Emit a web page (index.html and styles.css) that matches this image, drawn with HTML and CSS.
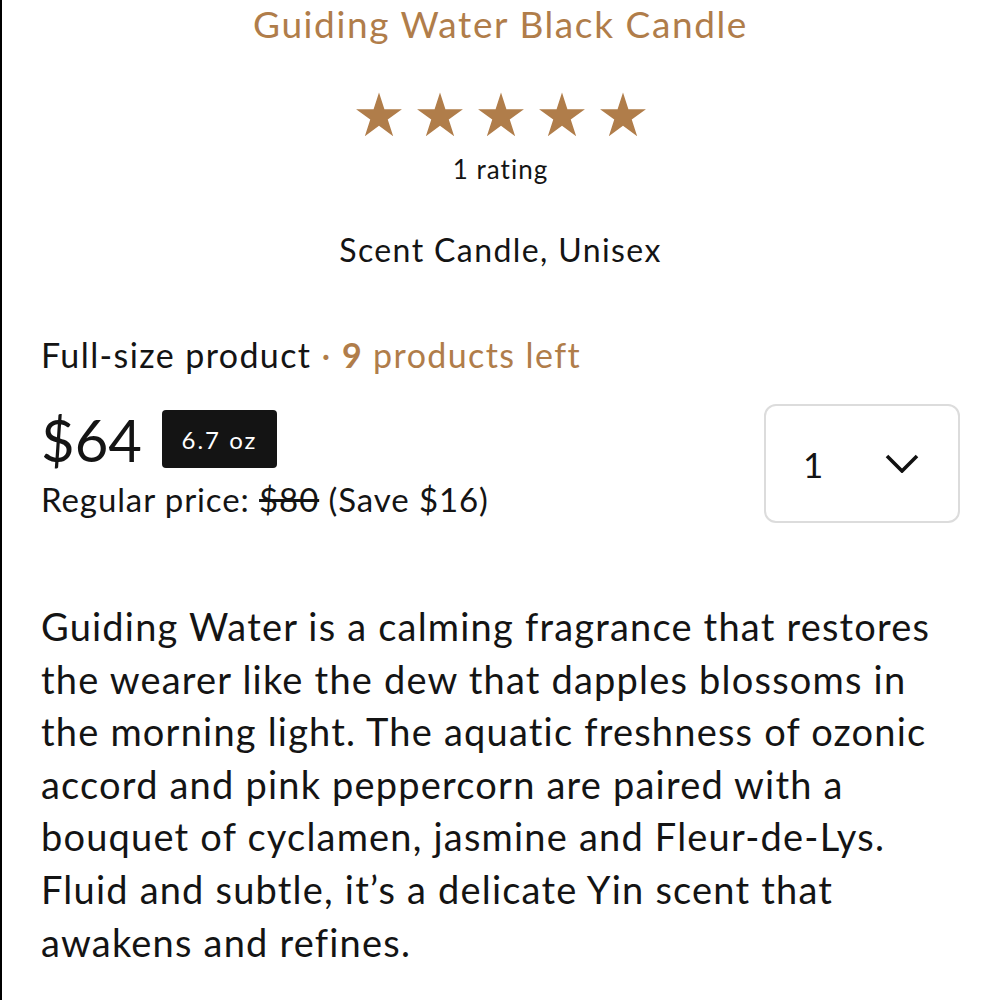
FILE: index.html
```html
<!DOCTYPE html>
<html lang="en">
<head>
<meta charset="utf-8">
<title>Guiding Water Black Candle</title>
<link rel="stylesheet" href="styles.css">
</head>
<body>
<main class="page">
  <h1 class="title">Guiding Water Black Candle</h1>
  <div class="stars" aria-label="5 out of 5 stars">
    <svg class="star" viewBox="0 0 24 24"><path d="M12 1.2l2.6 8h8.4l-6.8 4.9 2.6 8.1L12 17.2l-6.8 5 2.6-8.1L1 9.2h8.4z"/></svg>
    <svg class="star" viewBox="0 0 24 24"><path d="M12 1.2l2.6 8h8.4l-6.8 4.9 2.6 8.1L12 17.2l-6.8 5 2.6-8.1L1 9.2h8.4z"/></svg>
    <svg class="star" viewBox="0 0 24 24"><path d="M12 1.2l2.6 8h8.4l-6.8 4.9 2.6 8.1L12 17.2l-6.8 5 2.6-8.1L1 9.2h8.4z"/></svg>
    <svg class="star" viewBox="0 0 24 24"><path d="M12 1.2l2.6 8h8.4l-6.8 4.9 2.6 8.1L12 17.2l-6.8 5 2.6-8.1L1 9.2h8.4z"/></svg>
    <svg class="star" viewBox="0 0 24 24"><path d="M12 1.2l2.6 8h8.4l-6.8 4.9 2.6 8.1L12 17.2l-6.8 5 2.6-8.1L1 9.2h8.4z"/></svg>
  </div>
  <p class="rating">1 rating</p>
  <p class="type">Scent Candle, Unisex</p>
  <p class="stock">Full-size product <span class="accent">· <b>9</b> products left</span></p>
  <div class="buy-row">
    <div class="price-block">
      <div class="price-line">
        <span class="price">$64</span>
        <span class="badge">6.7 oz</span>
      </div>
      <p class="regular">Regular price: <s>$80</s> (Save $16)</p>
    </div>
    <div class="qty">
      <span class="qty-value">1</span>
      <svg class="chevron" viewBox="0 0 34 19"><path d="M2 2l15 15L32 2" fill="none" stroke="#111" stroke-width="3.6"/></svg>
    </div>
  </div>
  <p class="desc">Guiding Water is a calming fragrance that restores<br>the wearer like the dew that dapples blossoms in<br>the morning light. The aquatic freshness of ozonic<br>accord and pink peppercorn are paired with a<br>bouquet of cyclamen, jasmine and Fleur-de-Lys.<br>Fluid and subtle, it’s a delicate Yin scent that<br>awakens and refines.</p>
</main>
</body>
</html>
```
FILE: styles.css
```css
html, body {
  margin: 0;
  padding: 0;
  background: #fff;
}
.page {
  box-sizing: border-box;
  min-height: 1000px;
  border-left: 2px solid #000;
  padding: 0 40px 0 39px;
  font-family: Lato, "Liberation Sans", sans-serif;
  font-variant-ligatures: none;
  color: #141414;
}
.title {
  margin: 0;
  text-align: center;
  font-size: 37px;
  font-weight: 400;
  line-height: 48px;
  letter-spacing: 1.6px;
  color: #B07D4A;
}
.stars {
  display: flex;
  justify-content: center;
  gap: 11px;
  margin-top: 42px;
}
.star {
  display: block;
  width: 50px;
  height: 50px;
  fill: #B07D4A;
}
.rating {
  margin: 12px 0 0;
  text-align: center;
  font-size: 26px;
  line-height: 34px;
  letter-spacing: 1px;
}
.type {
  margin: 44px 0 0;
  text-align: center;
  font-size: 32px;
  line-height: 40px;
  letter-spacing: 1.4px;
}
.stock {
  margin: 64px 0 0;
  font-size: 34px;
  line-height: 42px;
  letter-spacing: 1.4px;
}
.accent {
  color: #B07D4A;
}
.accent b {
  font-weight: 700;
}
.buy-row {
  display: flex;
  justify-content: space-between;
  align-items: flex-start;
  margin-top: 28px;
}
.price-line {
  display: flex;
  align-items: flex-start;
  gap: 20px;
}
.price {
  font-size: 58px;
  line-height: 71px;
}
.badge {
  display: flex;
  align-items: center;
  justify-content: center;
  width: 115px;
  height: 58px;
  margin-top: 6px;
  background: #141414;
  color: #fff;
  border-radius: 4px;
  font-size: 24px;
  letter-spacing: 2px;
}
.regular {
  margin: 4px 0 0;
  font-size: 33px;
  line-height: 40px;
  letter-spacing: 0.9px;
}
.qty {
  box-sizing: border-box;
  display: flex;
  align-items: center;
  justify-content: space-between;
  width: 196px;
  height: 119px;
  border: 2px solid #dcdcdc;
  border-radius: 12px;
  padding: 0 39px 0 37px;
}
.qty-value {
  font-size: 35px;
  line-height: 40px;
}
.chevron {
  display: block;
  width: 34px;
  height: 19px;
}
.desc {
  margin: 77px 0 0;
  font-size: 38px;
  line-height: 52.6px;
  letter-spacing: 1.2px;
}
```
